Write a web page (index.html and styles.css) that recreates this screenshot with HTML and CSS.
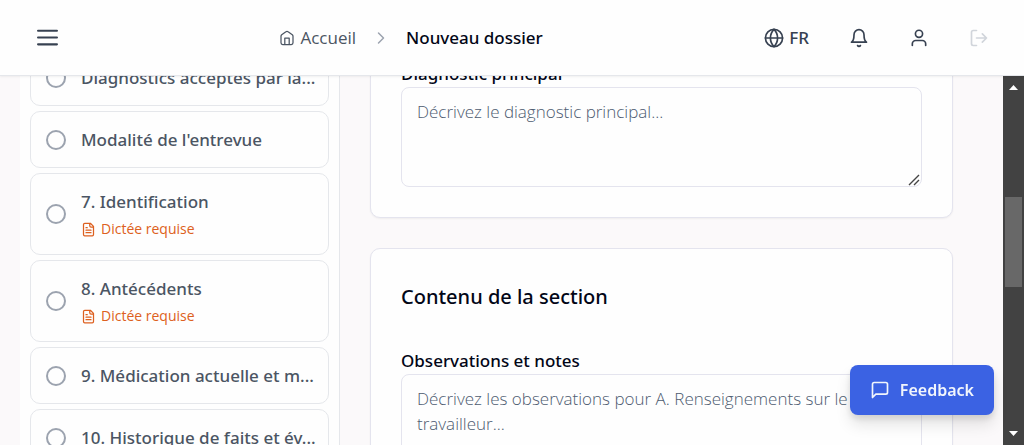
FILE: index.html
```html
<!DOCTYPE html>
<html lang="fr">
<head>
<meta charset="utf-8">
<meta name="viewport" content="width=device-width, initial-scale=1">
<title>Nouveau dossier</title>
<link rel="stylesheet" href="styles.css">
</head>
<body>
<header class="topbar">
  <button class="icon-btn" type="button" aria-label="Menu">
    <svg class="icon-menu" viewBox="0 0 20 20"><path d="M1 3.5h18M1 10h18M1 16.5h18"/></svg>
  </button>
  <nav class="crumbs" aria-label="Fil d'Ariane">
    <a class="crumb-home" href="#">
      <svg class="icon-home" viewBox="0 0 16 16"><path d="M2 6.2v6.6a1.7 1.7 0 0 0 1.7 1.7h8.6a1.7 1.7 0 0 0 1.7-1.7V6.2a1.8 1.8 0 0 0-.7-1.4L9.1 1.8a1.8 1.8 0 0 0-2.2 0L2.7 4.8A1.8 1.8 0 0 0 2 6.2zM5.8 14.4V8h4.4v6.4"/></svg>
      Accueil</a>
    <svg class="icon-chevron" viewBox="0 0 20 20"><path d="m7.5 15 5-5-5-5"/></svg>
    <span class="crumb-current">Nouveau dossier</span>
  </nav>
  <div class="actions">
    <button class="icon-btn lang" type="button">
      <svg class="icon" viewBox="0 0 24 24"><circle cx="12" cy="12" r="10.3"/><path d="M12 1.7a14.5 14.5 0 0 0 0 20.6 14.5 14.5 0 0 0 0-20.6M1.7 12h20.6"/></svg>
      FR</button>
    <button class="icon-btn" type="button" aria-label="Notifications">
      <svg class="icon" viewBox="0 0 24 24"><path d="M6 8a6 6 0 0 1 12 0c0 7 3 9 3 9H3s3-2 3-9M10.3 21a1.94 1.94 0 0 0 3.4 0"/></svg>
    </button>
    <button class="icon-btn" type="button" aria-label="Profil">
      <svg class="icon" viewBox="0 0 24 24"><path d="M20 21v-2a4 4 0 0 0-4-4H8a4 4 0 0 0-4 4v2"/><circle cx="12" cy="7" r="4.3"/></svg>
    </button>
    <button class="icon-btn" type="button" aria-label="Déconnexion" disabled>
      <svg class="icon" viewBox="0 0 24 24"><path d="M9 21H5a2 2 0 0 1-2-2V5a2 2 0 0 1 2-2h4M16 17l5-5-5-5M21 12H9"/></svg>
    </button>
  </div>
</header>

<div class="workspace">
  <aside class="sidebar">
    <ul class="sections">
      <li><a class="section" href="#"><span class="ring"></span><span class="section-text"><span class="section-title">Diagnostics acceptés par la...</span></span></a></li>
      <li><a class="section" href="#"><span class="ring"></span><span class="section-text"><span class="section-title">Modalité de l'entrevue</span></span></a></li>
      <li><a class="section" href="#"><span class="ring"></span><span class="section-text"><span class="section-title">7. Identification</span>
        <span class="dictation"><svg class="icon-doc" viewBox="0 0 24 24"><path d="M15 2H6a2 2 0 0 0-2 2v16a2 2 0 0 0 2 2h12a2 2 0 0 0 2-2V7zM14 2v4a2 2 0 0 0 2 2h4M10 9H8M16 13H8M16 17H8"/></svg>Dictée requise</span></span></a></li>
      <li><a class="section" href="#"><span class="ring"></span><span class="section-text"><span class="section-title">8. Antécédents</span>
        <span class="dictation"><svg class="icon-doc" viewBox="0 0 24 24"><path d="M15 2H6a2 2 0 0 0-2 2v16a2 2 0 0 0 2 2h12a2 2 0 0 0 2-2V7zM14 2v4a2 2 0 0 0 2 2h4M10 9H8M16 13H8M16 17H8"/></svg>Dictée requise</span></span></a></li>
      <li><a class="section" href="#"><span class="ring"></span><span class="section-text"><span class="section-title">9. Médication actuelle et m...</span></span></a></li>
      <li><a class="section" href="#"><span class="ring"></span><span class="section-text"><span class="section-title">10. Historique de faits et év...</span></span></a></li>
    </ul>
  </aside>

  <main class="content">
    <section class="card">
      <label class="label" for="diagnostic">Diagnostic principal</label>
      <textarea class="field" id="diagnostic" placeholder="Décrivez le diagnostic principal..."></textarea>
    </section>
    <section class="card">
      <h2 class="card-title">Contenu de la section</h2>
      <label class="label" for="notes">Observations et notes</label>
      <textarea class="field" id="notes" placeholder="Décrivez les observations pour A. Renseignements sur le travailleur..."></textarea>
    </section>
  </main>

  <div class="scrollbar" aria-hidden="true">
    <svg class="arrow" viewBox="0 0 21 21"><path d="M6 14 10.5 9 15 14z"/></svg>
    <span></span>
    <span class="thumb"></span>
    <span></span>
    <svg class="arrow" viewBox="0 0 21 21"><path d="M6 7 10.5 12 15 7z"/></svg>
  </div>
</div>

<button class="feedback" type="button">
  <svg class="icon-chat" viewBox="0 0 24 24"><path d="M21 15a2 2 0 0 1-2 2H7l-4 4V5a2 2 0 0 1 2-2h14a2 2 0 0 1 2 2z"/></svg>
  Feedback</button>
</body>
</html>
```

FILE: styles.css
```css
* { box-sizing: border-box; }

body {
  margin: 0;
  height: 100vh;
  display: flex;
  flex-direction: column;
  overflow: hidden;
  background: #fbf9fa;
  color: #020617;
  font: 400 17px/25px "Open Sans", "Noto Sans", sans-serif;
}

svg {
  display: block;
  flex: none;
  fill: none;
  stroke: currentColor;
  stroke-width: 2;
  stroke-linecap: round;
  stroke-linejoin: round;
}

button { font: inherit; cursor: pointer; }
a { color: inherit; text-decoration: none; }

.topbar {
  flex: none;
  display: flex;
  align-items: center;
  justify-content: space-between;
  height: 76px;
  padding: 0 35px 0 37px;
  background: #fefefe;
  border-bottom: 1px solid #e5e7eb;
  box-shadow: 0 1px 2px rgba(0, 0, 0, 0.06);
  z-index: 1;
}

.icon-btn {
  display: flex;
  align-items: center;
  gap: 5px;
  padding: 0;
  border: 0;
  background: none;
  color: #374151;
}
.icon-btn:disabled { color: #d1d5db; }
.icon { width: 20px; height: 20px; }
.icon-menu { width: 21px; height: 21px; }

.actions { display: flex; align-items: center; gap: 40px; }

.crumbs { display: flex; align-items: center; gap: 15px; }
.crumb-home { display: flex; align-items: center; gap: 5px; color: #4b5563; }
.icon-home { width: 16px; height: 16px; stroke-width: 1.25; }
.icon-chevron { width: 20px; height: 20px; color: #9ca3af; stroke-width: 1.5; }

.lang,
.crumb-current,
.section-title,
.label {
  font-family: "Noto Sans", "Open Sans", sans-serif;
  font-weight: 500;
}

.workspace {
  flex: 1;
  min-height: 0;
  display: grid;
  grid-template-columns: 320px minmax(0, 1fr) 21px;
  padding-left: 20px;
  overflow: hidden;
}

.sidebar {
  min-height: 0;
  overflow: hidden;
  padding: 0 10px;
  background: #fefefe;
  border-right: 1px solid #e5e7eb;
}
/* The list is scrolled part of the way past its first row. */
.sections {
  display: flex;
  flex-direction: column;
  gap: 5px;
  margin: -27px 0 0;
  padding: 0;
  list-style: none;
}
.section {
  display: flex;
  align-items: center;
  gap: 15px;
  padding: 15px;
  border: 1px solid #e5e7eb;
  border-radius: 10px;
  color: #4b5563;
}
.ring {
  flex: none;
  width: 20px;
  height: 20px;
  border: 2px solid #9ca3af;
  border-radius: 50%;
}
.section-text { flex: 1; min-width: 0; }
.section-title {
  display: block;
  white-space: nowrap;
}
.dictation {
  display: flex;
  align-items: center;
  gap: 5px;
  padding-top: 5px;
  color: #dd6020;
  font-size: 14px;
  line-height: 20px;
}
.icon-doc { width: 15px; height: 15px; }

.content {
  min-height: 0;
  display: flex;
  flex-direction: column;
  gap: 30px;
  overflow: hidden;
  padding: 0 50px 0 30px;
}
.card {
  flex: none;
  padding: 30px;
  background: #fefefe;
  border: 1px solid #e4e4ee;
  border-radius: 10px;
  box-shadow: 0 1px 2px rgba(0, 0, 0, 0.05);
}
/* The form is scrolled so that the first card starts above the view. */
.card:first-child { margin-top: -46px; }
.card-title {
  margin: 0 0 33px;
  font-family: "Noto Sans", "Open Sans", sans-serif;
  font-size: 20px;
  font-weight: 500;
  line-height: 36px;
}
.label { display: block; line-height: 26px; }
.field {
  display: block;
  width: 100%;
  height: 100px;
  padding: 11px 15px;
  border: 1px solid #e4e4ee;
  border-radius: 8px;
  background: #fefefe;
  color: inherit;
  font: inherit;
  overflow: hidden;
  resize: vertical;
}
.field::placeholder { color: #4d5b70; font-weight: 300; opacity: 1; }
.field::-webkit-resizer {
  background: url("data:image/svg+xml,%3Csvg xmlns='http://www.w3.org/2000/svg' width='15' height='15' fill='none' stroke='%23444' stroke-width='1.4'%3E%3Cpath d='M3 14 13 4M8 14l5-5'/%3E%3C/svg%3E") right bottom no-repeat;
}

.scrollbar {
  display: grid;
  grid-template-rows: 21px 100fr 90px 137fr 21px;
  background: #424242;
}
.thumb { margin: 0 2px; background: #686868; }
.arrow { width: 21px; height: 21px; fill: #fff; stroke: none; }

.feedback {
  position: fixed;
  right: 30px;
  bottom: 30px;
  display: flex;
  align-items: center;
  gap: 10px;
  height: 50px;
  padding: 0 20px;
  border: 0;
  border-radius: 8px;
  background: #3b62e3;
  color: #f1f5fc;
  font-family: "Noto Sans", "Open Sans", sans-serif;
  font-size: 16px;
  font-weight: 600;
  box-shadow: 0 10px 15px rgba(0, 0, 0, 0.1), 0 4px 6px rgba(0, 0, 0, 0.1);
}
.icon-chat { width: 20px; height: 20px; }
```
